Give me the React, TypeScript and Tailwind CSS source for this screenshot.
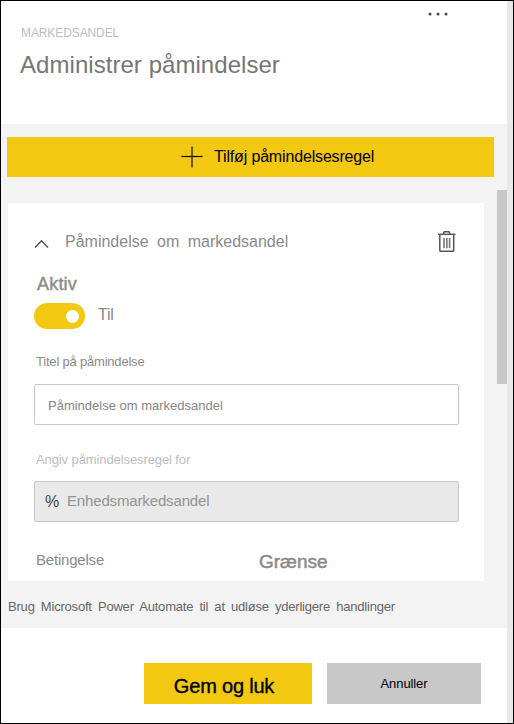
import React from "react";

function MoreIcon() {
  return (
    <svg width="20" height="4" viewBox="0 0 20 4" fill="#4a4a4a">
      <circle cx="2" cy="2" r="1.5" />
      <circle cx="10" cy="2" r="1.5" />
      <circle cx="18" cy="2" r="1.5" />
    </svg>
  );
}

function PlusIcon() {
  return (
    <svg width="22" height="22" viewBox="0 0 22 22" fill="none">
      <path d="M11 0.5V21.5" stroke="#6b5a08" strokeWidth="2" />
      <path d="M0.5 10.5H21.5" stroke="#000" strokeWidth="1.2" />
    </svg>
  );
}

function ChevronIcon() {
  return (
    <svg width="16" height="10" viewBox="0 0 16 10" fill="none" stroke="#555" strokeWidth="1.5">
      <path d="M1 8.6L7.5 1.8L14 8.6" />
    </svg>
  );
}

function TrashIcon() {
  return (
    <svg width="18" height="22" viewBox="0 0 18 22" fill="none" stroke="#555">
      <path d="M0 3.3H17.5" strokeWidth="1.4" />
      <path d="M5.7 3V1.5Q5.7 0.8 6.5 0.8H10.7Q11.5 0.8 11.5 1.5V3" strokeWidth="1.5" />
      <path d="M1.8 4V19.2Q1.8 20.3 2.8 20.3H14.7Q15.7 20.3 15.7 19.2V4" strokeWidth="1.5" />
      <path d="M6 7V17.3M8.8 7V17.3M11.6 7V17.3" strokeWidth="1.6" stroke="#777" />
    </svg>
  );
}

export default function App() {
  return (
    <div className="flex h-[724px] w-[514px] overflow-hidden border border-black bg-white whitespace-nowrap font-['Liberation_Sans',Arial,sans-serif]">
      <div className="flex w-[506px] flex-col">
        <header className="h-[123px] shrink-0">
          <div className="flex h-6 items-start justify-end pt-[10.5px] pr-[59px]">
            <MoreIcon />
          </div>
          <p className="ml-5 text-xs leading-4 tracking-[-0.1px] text-[#bdbdbd]">MARKEDSANDEL</p>
          <h1 className="mt-2 ml-[19px] text-2xl leading-8 tracking-[0.05px] text-[#767676]">
            Administrer påmindelser
          </h1>
        </header>

        <main className="flex h-[504px] shrink-0 justify-between bg-[#f3f3f3]">
          <div className="pt-[13px]">
            <button className="ml-1.5 flex h-10 w-[487px] items-center bg-[#f2c811] pl-[174px] text-base tracking-[-0.16px] text-black">
              <PlusIcon />
              <span className="ml-[11px]">Tilføj påmindelsesregel</span>
            </button>

            <section className="mt-[26px] ml-[7px] h-[378px] w-[476px] bg-white">
              <div className="flex h-[69px] items-start pt-[27px] pl-[26px]">
                <div className="pt-[9px]">
                  <ChevronIcon />
                </div>
                <h2 className="ml-[15px] w-[373px] text-base leading-6 [word-spacing:4px] text-[#8a8a8a]">
                  Påmindelse om markedsandel
                </h2>
                <div className="pt-px">
                  <TrashIcon />
                </div>
              </div>
              <p className="ml-[29px] h-7 text-lg leading-6 tracking-[0.2px] text-[#8a8a8a] [-webkit-text-stroke:0.4px_#8a8a8a]">Aktiv</p>
              <div className="ml-[26px] flex h-[31px] items-start">
                <div className="mt-[3px] flex h-[26px] w-[51px] items-center justify-end rounded-full bg-[#f2c811] pr-1.5">
                  <div className="size-[13px] rounded-full bg-white" />
                </div>
                <span className="ml-[13px] pt-[3px] text-base leading-6 tracking-[-0.2px] text-[#8a8a8a]">Til</span>
              </div>
              <label className="mt-[21px] ml-7 block h-8 text-[13px] leading-5 tracking-[-0.2px] text-[#8a8a8a]">
                Titel på påmindelse
              </label>
              <div className="ml-[26px] flex h-[41px] w-[425px] items-center rounded-[2px] border border-[#c8c8c8] pt-0.5 pl-[13px] text-[13px] text-[#858585]">
                Påmindelse om markedsandel
              </div>
              <label className="mt-[25px] ml-7 block h-[31px] text-[13px] leading-5 tracking-[-0.1px] text-[#bdbdbd]">
                Angiv påmindelsesregel for
              </label>
              <div className="ml-[26px] flex h-[41px] w-[425px] items-center rounded-[2px] border border-[#c8c8c8] bg-[#e9e9e9] pl-[10px]">
                <span className="w-[22px] text-base text-[#444]">%</span>
                <span className="text-[15px] tracking-[-0.15px] text-[#939393]">Enhedsmarkedsandel</span>
              </div>
              <div className="flex items-start pt-[26px] pl-7 leading-6 text-[#8a8a8a]">
                <span className="w-[223px] text-[15px] tracking-[-0.2px]">Betingelse</span>
                <span className="pt-0.5 text-[19px] leading-6 [-webkit-text-stroke:0.5px_#8a8a8a]">Grænse</span>
              </div>
            </section>

            <p className="mt-[15px] ml-[7px] text-[13px] leading-[22px] tracking-[-0.2px] [word-spacing:2.75px] text-[#666]">
              Brug Microsoft Power Automate til at udløse yderligere handlinger
            </p>
          </div>
          <div className="mt-[66px] h-[194px] w-2.5 bg-[#c8c8c8]" />
        </main>

        <footer className="flex gap-[15px] pt-[35px] pl-[143px] text-black">
          <button className="h-[41px] w-[168px] bg-[#f2c811] pt-1 pr-2 text-xl tracking-[-0.2px] [-webkit-text-stroke:0.35px_#000]">
            Gem og luk
          </button>
          <button className="h-[41px] w-[154px] bg-[#c8c8c8] text-[13px] tracking-[-0.1px]">Annuller</button>
        </footer>
      </div>
      <div className="w-1.5 bg-[#e9e9e9]" />
    </div>
  );
}
